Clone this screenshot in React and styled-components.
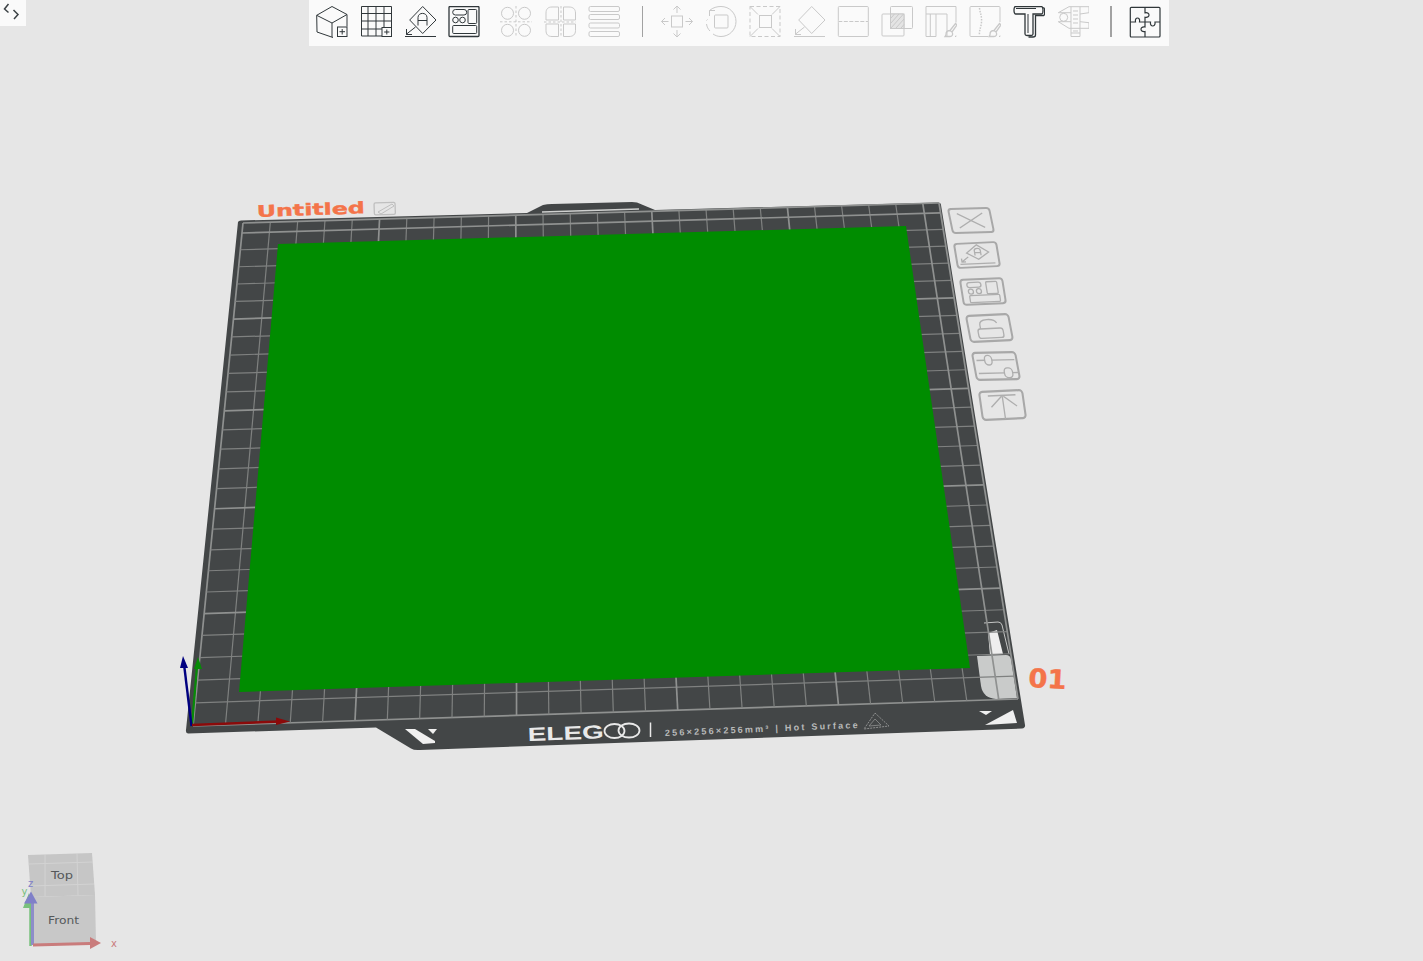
import styled, { createGlobalStyle } from "styled-components";

const GlobalStyle = createGlobalStyle`
  html, body {
    margin: 0;
    height: 100%;
    overflow: hidden;
    background: #e6e6e6;
    font-family: "Liberation Sans", Arial, sans-serif;
  }
`;

// maps the 256x256 bed onto the quad seen in the viewport
const quadMap = ([p0, p1, p2, p3]) => {
  const dx1 = p1[0] - p2[0];
  const dx2 = p3[0] - p2[0];
  const dx3 = p0[0] - p1[0] + p2[0] - p3[0];
  const dy1 = p1[1] - p2[1];
  const dy2 = p3[1] - p2[1];
  const dy3 = p0[1] - p1[1] + p2[1] - p3[1];
  const det = dx1 * dy2 - dx2 * dy1;
  const g = (dx3 * dy2 - dx2 * dy3) / det;
  const h = (dx1 * dy3 - dx3 * dy1) / det;
  const a = p1[0] - p0[0] + g * p1[0];
  const b = p3[0] - p0[0] + h * p3[0];
  const d = p1[1] - p0[1] + g * p1[1];
  const e = p3[1] - p0[1] + h * p3[1];
  return (u, v) => {
    const w = g * u + h * v + 1;
    return [(a * u + b * v + p0[0]) / w, (d * u + e * v + p0[1]) / w];
  };
};

const bed = quadMap([
  [193, 726],
  [1018, 699],
  [939, 203],
  [243, 223],
]);

const GRID_LINES = [];
for (let i = 0; i <= 26; i++) {
  const t = i === 26 ? 1 : (i * 10) / 256;
  const major = i % 5 === 0 || i === 26;
  GRID_LINES.push({ key: `x${i}`, a: bed(t, 0), b: bed(t, 1), major });
  GRID_LINES.push({ key: `y${i}`, a: bed(0, t), b: bed(1, t), major });
}

const SIDE_BUTTONS = [
  { quad: [948, 209, 989, 208, 953, 233], icon: "close" },
  { quad: [954, 244, 996, 242, 958, 268], icon: "lay" },
  { quad: [960, 280, 1002, 278, 964, 305], icon: "arrange" },
  { quad: [966, 316, 1008, 314, 971, 342], icon: "lock" },
  { quad: [972, 353, 1015, 352, 977, 380], icon: "sliders" },
  { quad: [979, 392, 1022, 390, 983, 420], icon: "top" },
];

const Page = styled.div`
  position: relative;
  width: 1423px;
  height: 961px;
  overflow: hidden;
  background: #e6e6e6;
`;

const Scene = styled.svg`
  position: absolute;
  inset: 0;
  display: block;
`;

const PanelToggle = styled.button`
  position: absolute;
  top: 0;
  left: 0;
  width: 26px;
  height: 26px;
  padding: 0;
  border: 0;
  background: #fafafa;
  color: #3c4245;
  svg {
    display: block;
  }
`;

const TopBar = styled.div`
  position: absolute;
  top: 0;
  left: 309px;
  width: 860px;
  height: 46px;
  box-sizing: border-box;
  padding: 6px 3px 0 1px;
  display: flex;
  align-items: flex-start;
  background: #fafafa;
`;

const ToolGroup = styled.div`
  display: flex;
  margin-left: ${(p) => p.$gap || 0}px;
`;

const ToolSlot = styled.div`
  width: 44px;
  height: 32px;
  display: flex;
  justify-content: center;
  color: ${(p) => (p.$off ? "#c9c9c9" : "#30373a")};
  svg {
    display: block;
    width: 32px;
    height: 32px;
    fill: none;
    stroke: currentColor;
    stroke-width: 1;
  }
`;

const Divider = styled.div`
  width: 1.5px;
  height: 31px;
  margin: 0 11.5px 0 15.5px;
  background: #a2a2a2;
  flex: none;
`;

const Icon = ({ children }) => <svg viewBox="0 0 32 32">{children}</svg>;

const brush = (
  <path
    d="M30.500 17.500L32 19L27 26L25 24.500zM25 24.500C22 24.500 21 26.500 21 28.500C21 29.500 20.300 30 20 30.500H25C27 30.500 28.500 28.500 27 26"
    strokeWidth="1.300"
  />
);

const TOOLS_A = [
  <Icon key="add">
    <path d="M16 .5L.7 9.300l.3 16.700 16 5.500M.7 9.300L16 17l15-8.500L16 .5M16 17v14M31 8.500V20.500" />
    <rect x="21.500" y="21" width="9.500" height="9.500" />
    <path d="M26.200 23v5.500M23.500 25.700H29" />
  </Icon>,
  <Icon key="grid">
    <path d="M22 30H1.500V.5h30V21M8 .5V30M16 .5V30M24 .5V21M1.500 7.500h30M1.500 15h30M1.500 23H22" />
    <rect x="22" y="21.500" width="9.500" height="9" />
    <path d="M26.800 23.500v5M24.200 26h5.200" />
  </Icon>,
  <Icon key="lay">
    <path d="M18.700.5L32 14 18.700 27.500 5.700 14zM14 19.500V11.500c0-5.500 9-5.500 9 0v8M14 14.500h9M11.500 21L2 28.500M2.500 23v5.500h5.500M1 30.500h31" />
  </Icon>,
  <Icon key="arrange">
    <rect x="1" y=".5" width="30" height="30" rx="1" strokeWidth="1.300" />
    <rect x="4.700" y="3.500" width="14" height="5.500" rx="2.700" />
    <rect x="20" y="3.500" width="8.700" height="14" rx="1" />
    <circle cx="7.500" cy="14" r="2.800" />
    <circle cx="14.500" cy="14" r="2.800" />
    <rect x="4.700" y="19.500" width="24" height="8" rx="1" />
  </Icon>,
];

const TOOLS_B = [
  <Icon key="clone">
    <circle cx="7.500" cy="7.300" r="6" />
    <circle cx="24.500" cy="7.300" r="6" />
    <circle cx="7.500" cy="24.300" r="6" />
    <circle cx="24.500" cy="24.300" r="6" />
    <path d="M16 0v31M0 15.800h32" strokeDasharray="2.500 2" />
  </Icon>,
  <Icon key="mirror">
    <path d="M14.500 1H8C4 1 2 3 2 7v7h12.500zM19.500 1H25c4 0 6.500 2 6.500 6v7h-12zM14.500 30.500H8c-4 0-6-2-6-6V18h12.500zM19.500 30.500H25c4 0 6.500-2 6.500-6V18h-12z" />
    <path d="M17 0v31M0 16h33" strokeDasharray="2.500 2" />
  </Icon>,
  <Icon key="stack">
    <rect x="1" y=".5" width="30.500" height="5" rx="1.500" />
    <rect x="1" y="8.500" width="30.500" height="5" rx="1.500" />
    <rect x="1" y="17" width="30.500" height="5" rx="1.500" />
    <rect x="1" y="25.500" width="30.500" height="5" rx="1.500" />
  </Icon>,
];

const TOOLS_C = [
  <Icon key="move">
    <rect x="10.500" y="10" width="11" height="11" />
    <path d="M16 7V0M12.500 3.500L16 0l3.500 3.500M16 24v7M12.500 27.500L16 31l3.500-3.500M7.500 15.500H.5M4 12L.5 15.500 4 19M24.500 15.500h7M28 12l3.500 3.500L28 19" />
  </Icon>,
  <Icon key="rotate">
    <rect x="9.500" y="9" width="13.500" height="13" rx="1" />
    <path d="M4.500 4.500C8 1.500 12 .5 16 .5c8.500 0 15 6.700 15 15s-6.700 15-15 15c-3 0-5.500-.8-8-2.500M5 25c-2-2-3-4-3.500-7" />
    <path d="M1.500 14.500l1-1M4.500 10V4.500H10" />
  </Icon>,
  <Icon key="scale">
    <rect x="1" y=".5" width="30" height="30" strokeDasharray="4 2.500" />
    <rect x="10.500" y="9.500" width="12" height="12" />
    <path d="M1 .5l8 8M31 .5l-8 8M1 30.500l8-8M31 30.500l-8-8" />
  </Icon>,
  <Icon key="layflat">
    <path d="M18.700 .5L32 14 18.700 27.500 5.700 14zM11.500 21L2 28.500M2.500 23v5.500h5.500M1 30.500h31" />
  </Icon>,
  <Icon key="cut">
    <rect x="1.300" y=".5" width="30" height="30" rx="1" />
    <path d="M1.300 15.500h30" strokeDasharray="4 1.500" stroke="#fafafa" strokeWidth="1.500" />
    <path d="M1.300 15.500h30" strokeDasharray="4 1.500" />
  </Icon>,
  <Icon key="bool">
    <rect x="1" y="8" width="22" height="22" rx="1" />
    <rect x="9.500" y=".5" width="22" height="22" rx="1" />
    <rect x="9.500" y="8" width="13.500" height="14.500" fill="#e4e4e4" />
    <path d="M10 12l3.500-4M10 17l8-9M10 22l12.500-14M15 22l8-9M20 22l3-3.500" />
  </Icon>,
  <Icon key="support">
    <path d="M1 30.500V.5h30v16M1 8h21v22.500M1 30.500h10M5.300 8v22.500M11 8v22.500M30 30.500h1v-1" />
    {brush}
  </Icon>,
  <Icon key="seam">
    <path d="M19 30.500H2A1 1 0 0 1 1 29.500V1.500a1 1 0 0 1 1-1h28a1 1 0 0 1 1 1V16M30 30.500h1v-1" />
    <path
      d="M10.500 2C11 7 13 10 12.500 16S10 24 10.500 29"
      strokeDasharray="1.500 1.300"
      strokeWidth="1.500"
    />
    {brush}
  </Icon>,
  <Icon key="text">
    <g stroke="#30373a" strokeWidth="1.300">
      <path d="M2.500.5h26c2 0 2 7.500 0 7.500H20v20c0 1-.8 1.500-2 1.500h-4c-1.200 0-2-.5-2-1.500V8H2.500C.5 8 .5 .5 2.500 .5z" />
      <path d="M29.500 1.800h1.200c1.300 0 1.300 7.700 0 7.700H22.500v19.500c0 1.300-1 2-2.500 2h-4.500" />
      <path d="M3 2.500h20M15 8v19" strokeWidth="1" />
    </g>
  </Icon>,
  <Icon key="measure">
    <path d="M1.300 6.700L12 .7h20v6L23 8M1.300 15.700L12 22.300h20v-5.600L23 15.700" />
    <path d="M14 .7V30.500h9V.7M14 27h9M16 5h5M16 9h5M16 13h5M16 17h5M16 25h5" />
    <circle cx="6.700" cy="11.300" r="4" />
    <path d="M1.300 6.700h12.700M1.300 15.700h12.700" />
  </Icon>,
];

const TOOLS_D = [
  <Icon key="puzzle">
    <g stroke="#30373a" strokeWidth="1.200">
      <rect x="1.300" y="1.300" width="29.700" height="29.700" rx="1" />
      <path d="M16 1.300v5.500c3 -.5 4 1 4 2.200s-1 2.800-4 2.300v4.700h-5.500c.6-3-.8-4-2-4s-2.600 1-2 4H1.300M16 16v5c-3-.5-4 1-4 2.200s1 2.800 4 2.300v5.500M16 16h5.500c-.5 3 1 4 2.200 4s2.800-1 2.300-4h5" />
    </g>
  </Icon>,
];

const SideIcon = ({ kind }) => {
  if (kind === "close") return <path d="M8 5l26 15M34 5L8 20" />;
  if (kind === "lay")
    return (
      <>
        <path d="M22 2l11 8-11 7-11-7z" />
        <path d="M19 13V8c0-3 6-3 6 0v5M19 10h6M12 14l-7 5M5 15.500V19h4M3 21.500h35" />
      </>
    );
  if (kind === "arrange")
    return (
      <>
        <rect x="6" y="3" width="14" height="5" rx="2.500" />
        <rect x="25" y="3" width="11" height="12" rx="1" />
        <circle cx="9" cy="12" r="2.500" />
        <circle cx="17" cy="12" r="2.500" />
        <rect x="7" y="16" width="30" height="7" rx="1" />
      </>
    );
  if (kind === "lock")
    return (
      <>
        <rect x="9" y="13" width="25" height="9" rx="2.500" />
        <path d="M12 13V9c0-6 15-6 17-1" />
      </>
    );
  if (kind === "sliders")
    return (
      <>
        <path d="M3 7h8M18 7h22M3 19h25M36 19h6" />
        <rect x="11" y="2.500" width="7" height="9" rx="3.500" />
        <rect x="28" y="14.500" width="8" height="9" rx="3.500" />
      </>
    );
  return <path d="M8 4h27M22 4v21M22 4L10 14M22 4l13 10" />;
};

const SideButton = ({ quad, icon }) => {
  const [x0, y0, x1, y1, x2, y2] = quad;
  const matrix = [(x1 - x0) / 42, (y1 - y0) / 42, (x2 - x0) / 25, (y2 - y0) / 25, x0, y0];
  return (
    <g transform={`matrix(${matrix.join(" ")})`} fill="none" stroke="#aeaeae" strokeWidth="1.300">
      <rect x="0" y="0" width="42" height="25" rx="3" strokeWidth="2" stroke="#a8a8a8" />
      <SideIcon kind={icon} />
    </g>
  );
};

const PlateLabel = styled.text`
  font-family: "DejaVu Sans", "Liberation Sans", sans-serif;
  font-weight: 700;
  fill: #f4744a;
  stroke: #f4744a;
  stroke-width: 0.4px;
`;

const BrandLabel = styled.text`
  font-family: "Liberation Sans", Arial, sans-serif;
  font-weight: ${(p) => p.$weight || 400};
  fill: ${(p) => p.$color || "#e9e9e9"};
`;

const CubeLabel = styled.text`
  font-family: "DejaVu Sans", "Liberation Sans", sans-serif;
  font-size: 10px;
  fill: #55585a;
`;

const AxisLabel = styled.text`
  font-family: "DejaVu Sans", "Liberation Sans", sans-serif;
  font-size: 10px;
  fill: ${(p) => p.$color};
`;

const PrintBed = () => (
  <g>
    <path
      d="M238 222Q238.500 220.500 241 220.500L527 213L543 205Q547 204 552 204L632 202L637 202.500L655 210L938 202.500Q941 202.500 941 205L1025 725Q1025.500 728 1022 728.500L420 750Q414 750.500 411 748.500L376 727.500L188 733.500Q185.500 733.500 186 730z"
      fill="#434647"
    />
    <path d="M542 212L639 209" stroke="#cfd0cf" strokeWidth="1.500" fill="none" />
    <path
      d="M984 623L998 622Q1001 622 1002 625L1009 654"
      stroke="#c4c5c4"
      strokeWidth="1"
      fill="none"
    />
    <path d="M988 633L997 630L1003 654L990 655z" fill="#eeeeee" />
    <path
      d="M977 656L1006 655Q1010 655 1011 659L1017 698L996 699Q983 698 981 686z"
      fill="#c9cbca"
    />
    {GRID_LINES.map((l) => (
      <line
        key={l.key}
        x1={l.a[0]}
        y1={l.a[1]}
        x2={l.b[0]}
        y2={l.b[1]}
        stroke={l.major ? "#8f9190" : "#7f8180"}
        strokeWidth={l.major ? 1.700 : 1.200}
      />
    ))}
    <path d="M278 244L906 226L970 668L239 692z" fill="#008c00" />

    <path d="M405 729L415 729L435 741L435 743L423 744z" fill="#f0f0f0" />
    <path d="M428 729L437 729L433 734z" fill="#f0f0f0" />
    <path d="M985 725L1013 710L1017 723z" fill="#f0f0f0" />
    <path d="M979 711L992 711L986 715z" fill="#f0f0f0" />

    <g transform="rotate(-2 528 741)">
      <BrandLabel x="528" y="741" fontSize="19" $weight={700} textLength="76" lengthAdjust="spacingAndGlyphs">
        ELEG
      </BrandLabel>
    </g>
    <ellipse cx="614.500" cy="731" rx="10" ry="7" fill="none" stroke="#e9e9e9" strokeWidth="1.800" />
    <ellipse cx="629" cy="730.500" rx="10.500" ry="7" fill="none" stroke="#e9e9e9" strokeWidth="1.800" />
    <path d="M650.500 722.500V737" stroke="#e9e9e9" strokeWidth="1.500" />
    <g transform="rotate(-2.400 665 736)">
      <BrandLabel x="665" y="736" fontSize="9" $weight={700} $color="#b9baba" textLength="193" lengthAdjust="spacing">
        256×256×256mm³ | Hot Surface
      </BrandLabel>
    </g>
    <path d="M875 713L889 726L864 729z" fill="none" stroke="#8f9090" strokeWidth="1" strokeDasharray="2 1" />
    <path d="M875 719L881 725L869 726z" fill="none" stroke="#8f9090" strokeWidth="0.800" />

    <g transform="rotate(-2 257 217)">
      <PlateLabel x="257" y="217" fontSize="16" textLength="108" lengthAdjust="spacingAndGlyphs">
        Untitled
      </PlateLabel>
    </g>
    <g fill="none" stroke="#bfbfbf">
      <rect x="374" y="203" width="21" height="12" rx="1.500" strokeWidth="1.300" transform="rotate(-2 374 203)" />
      <path d="M378 212L392 204L394 206L381 214z" strokeWidth="1" />
    </g>
    <g transform="rotate(3 1028 687)">
      <PlateLabel x="1028" y="687" fontSize="26" textLength="38" lengthAdjust="spacingAndGlyphs">
        01
      </PlateLabel>
    </g>

    {SIDE_BUTTONS.map((b) => (
      <SideButton key={b.icon} quad={b.quad} icon={b.icon} />
    ))}

    <path d="M192 726L197 666" stroke="#078a07" strokeWidth="2.200" />
    <path d="M198 657L202 669L194 669z" fill="#078a07" />
    <path d="M191.500 726L184 664" stroke="#000080" strokeWidth="2.400" />
    <path d="M183 656L188 668L180 668z" fill="#000080" />
    <path d="M192 725L280 721.500" stroke="#8b0a0a" strokeWidth="2.600" />
    <path d="M290 721.500L276 717.500L276 725z" fill="#8b0a0a" />
  </g>
);

const NavCube = () => (
  <g>
    <path d="M28 855L92 853L95 895L31 897z" fill="#c6c6c6" />
    <path d="M31 897L95 895L96 943L32 945z" fill="#c8c8c8" />
    <path
      d="M45 855L45 896M77 854L78 895M29 864L93 862M30 886L94 884"
      stroke="#d3d3d3"
      strokeWidth="1"
      fill="none"
    />
    <path d="M30.500 946L30.500 905" stroke="#79c07c" strokeWidth="2.500" />
    <path d="M23 908L33 908L29 893z" fill="#79c07c" />
    <path d="M32.500 945L32.500 900" stroke="#8d8dc9" strokeWidth="3" />
    <path d="M24 903.500L37.500 903.500L31 891.500z" fill="#8080c8" />
    <path d="M33 945L90 943.500" stroke="#c97c7c" strokeWidth="3" />
    <path d="M101 943L90 937L90 949z" fill="#c97c7c" />
    <CubeLabel x="51" y="879" textLength="22" lengthAdjust="spacingAndGlyphs">
      Top
    </CubeLabel>
    <CubeLabel x="48" y="924" textLength="31" lengthAdjust="spacingAndGlyphs">
      Front
    </CubeLabel>
    <AxisLabel x="28" y="887" $color="#8080c8">z</AxisLabel>
    <AxisLabel x="21.500" y="895" $color="#79c07c">y</AxisLabel>
    <AxisLabel x="111" y="947" $color="#c97c7c">x</AxisLabel>
  </g>
);

const renderTools = (tools, off) =>
  tools.map((tool) => (
    <ToolSlot key={tool.key} $off={off && tool.key !== "text"}>
      {tool}
    </ToolSlot>
  ));

export default function App() {
  return (
    <Page>
      <GlobalStyle />
      <Scene width="1423" height="961" viewBox="0 0 1423 961">
        <PrintBed />
        <NavCube />
      </Scene>
      <PanelToggle aria-label="Toggle panel">
        <svg width="26" height="26" viewBox="0 0 26 26" fill="none" stroke="currentColor" strokeWidth="1.500">
          <path d="M8.500 4L4.500 9L8.500 12.500M13.500 10L18 14.500L14 19" />
        </svg>
      </PanelToggle>
      <TopBar>
        <ToolGroup>{renderTools(TOOLS_A, false)}</ToolGroup>
        <ToolGroup $gap={8}>{renderTools(TOOLS_B, true)}</ToolGroup>
        <Divider />
        <ToolGroup>{renderTools(TOOLS_C, true)}</ToolGroup>
        <Divider />
        <ToolGroup>{renderTools(TOOLS_D, false)}</ToolGroup>
      </TopBar>
    </Page>
  );
}
